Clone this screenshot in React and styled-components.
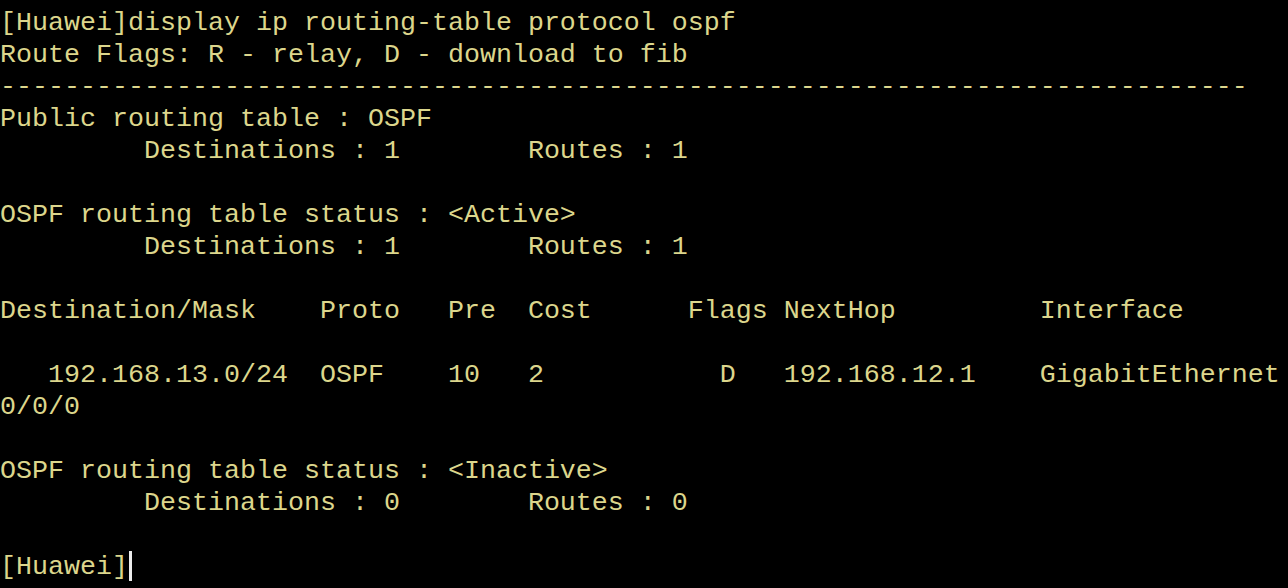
import React from "react";
import styled, { createGlobalStyle } from "styled-components";

// 기본 스타일 초기화
const GlobalStyle = createGlobalStyle`
  html, body {
    margin: 0;
    padding: 0;
    background: #000000;
    overflow: hidden;
  }
`;

// 터미널 화면 전체
const Screen = styled.div`
  width: 1288px;
  height: 588px;
  background: #000000;
  box-sizing: border-box;
  padding-top: 7px;
`;

// 한 줄 (16px 고정폭 글자)
const Line = styled.div`
  height: 32px;
  line-height: 32px;
  white-space: pre;
  font-family: "Liberation Mono", "Courier New", monospace;
  font-size: 26.6667px;
  color: #dcd68c;
`;

const Cursor = styled.span`
  display: inline-block;
  width: 3px;
  height: 30px;
  margin-left: 1px;
  vertical-align: -7px;
  background: #ececec;
`;

const lines = [
  "[Huawei]display ip routing-table protocol ospf",
  "Route Flags: R - relay, D - download to fib",
  "-".repeat(78),
  "Public routing table : OSPF",
  "         Destinations : 1        Routes : 1",
  "",
  "OSPF routing table status : <Active>",
  "         Destinations : 1        Routes : 1",
  "",
  "Destination/Mask    Proto   Pre  Cost      Flags NextHop         Interface",
  "",
  "   192.168.13.0/24  OSPF    10   2           D   192.168.12.1    GigabitEthernet",
  "0/0/0",
  "",
  "OSPF routing table status : <Inactive>",
  "         Destinations : 0        Routes : 0",
  "",
];

const App = () => (
  <>
    <GlobalStyle />
    <Screen>
      {lines.map((text, i) => (
        <Line key={i}>{text}</Line>
      ))}
      <Line>
        [Huawei]
        <Cursor />
      </Line>
    </Screen>
  </>
);

export default App;
